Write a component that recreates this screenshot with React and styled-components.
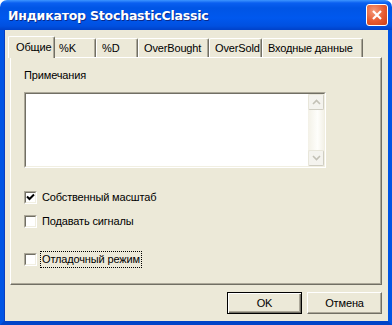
import React from "react";
import styled, { createGlobalStyle } from "styled-components";

const GlobalStyle = createGlobalStyle`
  html, body {
    margin: 0;
    padding: 0;
    background: #ffffff;
  }
  body {
    font-family: "Liberation Sans", Arial, sans-serif;
  }
`;

const tabs = [
  { label: "Общие", width: 47 },
  { label: "%K", width: 43 },
  { label: "%D", width: 42 },
  { label: "OverBought", width: 71 },
  { label: "OverSold", width: 53 },
  { label: "Входные данные", width: 101 },
];

const checks = [
  { label: "Собственный масштаб", checked: true, gap: 0 },
  { label: "Подавать сигналы", checked: false, gap: 11 },
  { label: "Отладочный режим", checked: false, gap: 25, focused: true },
];

const Window = styled.div`
  width: 392px;
  height: 325px;
  display: flex;
  flex-direction: column;
  box-sizing: border-box;
  border-radius: 7px 7px 0 0;
  overflow: hidden;
  font-size: 11px;
  letter-spacing: -0.15px;
  color: #000;
`;

const TitleBar = styled.div`
  height: 30px;
  flex: none;
  display: flex;
  align-items: center;
  justify-content: space-between;
  padding: 0 4px 0 8px;
  box-sizing: border-box;
  background: linear-gradient(
    to bottom,
    #3d95ff 0px,
    #0a5ff0 3px,
    #0055e5 8px,
    #0058ee 18px,
    #0050e0 26px,
    #0041c8 30px
  );
`;

const Title = styled.div`
  color: #fff;
  font-family: "DejaVu Sans", "Liberation Sans", sans-serif;
  font-weight: bold;
  font-size: 12.5px;
  letter-spacing: -0.2px;
  text-shadow: 1px 1px 0 #0a2a8a;
  padding-top: 1px;
`;

const CloseButton = styled.div`
  width: 22px;
  height: 22px;
  box-sizing: border-box;
  border: 1px solid #fff;
  border-radius: 3px;
  background: radial-gradient(circle at 35% 30%, #f59a7a 0%, #e65a30 55%, #cc4018 100%);
  display: flex;
  align-items: center;
  justify-content: center;
`;

const Body = styled.div`
  flex: 1;
  display: flex;
  flex-direction: column;
  background: #ece9d8;
  border-left: 4px solid #0055e5;
  border-right: 4px solid #0055e5;
  border-bottom: 4px solid #0044c8;
  box-shadow: inset 1px 0 0 #0a3fc0;
  padding: 6px;
`;

const TabRow = styled.div`
  display: flex;
  align-items: flex-end;
  height: 21px;
`;

const Tab = styled.div`
  position: relative;
  box-sizing: border-box;
  width: ${(p) => p.$width}px;
  height: ${(p) => (p.$active ? 22 : 19)}px;
  margin: 0 ${(p) => (p.$active ? -2 : 0)}px ${(p) => (p.$active ? -1 : 0)}px;
  z-index: ${(p) => (p.$active ? 2 : 1)};
  background: #ece9d8;
  border-top: 1px solid #fff;
  border-left: 1px solid #fff;
  border-right: 1px solid #716f64;
  border-radius: 2px 2px 0 0;
  box-shadow: inset -1px 0 0 #aca899;
  padding: ${(p) => (p.$active ? "4px 0 0 7px" : "3px 0 0 5px")};
  white-space: nowrap;
`;

const Panel = styled.div`
  flex: none;
  height: 228px;
  box-sizing: border-box;
  border-top: 1px solid #fff;
  border-left: 1px solid #fff;
  border-right: 1px solid #716f64;
  border-bottom: 1px solid #716f64;
  box-shadow: inset -1px -1px 0 #aca899;
  padding: 11px 0 0 13px;
  display: flex;
  flex-direction: column;
`;

const FieldLabel = styled.div`
  line-height: 13px;
`;

const Memo = styled.div`
  margin-top: 10px;
  width: 302px;
  height: 76px;
  box-sizing: border-box;
  border-top: 1px solid #aca899;
  border-left: 1px solid #aca899;
  border-right: 1px solid #fff;
  border-bottom: 1px solid #fff;
  display: flex;
`;

const MemoInner = styled.div`
  flex: 1;
  display: flex;
  border-top: 1px solid #716f64;
  border-left: 1px solid #716f64;
  border-right: 1px solid #f1efe2;
  border-bottom: 1px solid #f1efe2;
  background: #fff;
`;

const MemoText = styled.div`
  flex: 1;
`;

const ScrollBar = styled.div`
  width: 16px;
  display: flex;
  flex-direction: column;
  justify-content: space-between;
  background: linear-gradient(to right, #f3f1e7, #fefefb 60%, #f3f1e7);
`;

const ScrollButton = styled.div`
  height: 16px;
  box-sizing: border-box;
  border: 1px solid #e8e6da;
  border-right-color: #cfcdc2;
  border-bottom-color: #cfcdc2;
  border-radius: 2px;
  background: #f4f3ee;
  display: flex;
  align-items: center;
  justify-content: center;
`;

const CheckList = styled.div`
  margin-top: 23px;
  display: flex;
  flex-direction: column;
`;

const CheckRow = styled.div`
  display: flex;
  align-items: center;
  height: 13px;
  margin-top: ${(p) => p.$gap}px;
`;

const Box = styled.div`
  width: 13px;
  height: 13px;
  box-sizing: border-box;
  border-top: 1px solid #aca899;
  border-left: 1px solid #aca899;
  border-right: 1px solid #fff;
  border-bottom: 1px solid #fff;
  flex: none;
`;

const BoxInner = styled.div`
  width: 11px;
  height: 11px;
  box-sizing: border-box;
  border-top: 1px solid #716f64;
  border-left: 1px solid #716f64;
  border-right: 1px solid #f1efe2;
  border-bottom: 1px solid #f1efe2;
  background: #fff;
  display: flex;
  align-items: center;
  justify-content: center;
`;

const CheckLabel = styled.div`
  margin-left: 4px;
  padding: 1px;
  line-height: 13px;
  outline: ${(p) => (p.$focused ? "1px dotted #000" : "none")};
`;

const Footer = styled.div`
  margin-top: 7px;
  display: flex;
  justify-content: flex-end;
  gap: 5px;
`;

const Button = styled.div`
  width: 75px;
  height: 22px;
  box-sizing: border-box;
  display: flex;
  align-items: center;
  justify-content: center;
  background: #ece9d8;
  border-top: 1px solid ${(p) => (p.$default ? "#000" : "#fff")};
  border-left: 1px solid ${(p) => (p.$default ? "#000" : "#fff")};
  border-right: 1px solid ${(p) => (p.$default ? "#000" : "#716f64")};
  border-bottom: 1px solid ${(p) => (p.$default ? "#000" : "#716f64")};
  box-shadow: ${(p) =>
    p.$default
      ? "inset 1px 1px 0 #fff, inset -1px -1px 0 #716f64, inset -2px -2px 0 #aca899"
      : "inset -1px -1px 0 #aca899"};
`;

const CheckMark = () => (
  <svg width="9" height="9" viewBox="0 0 9 9">
    <path d="M1 3.5 L3.5 6 L8 1.5" fill="none" stroke="#000" strokeWidth="2" />
  </svg>
);

const Arrow = ({ up }) => (
  <svg width="9" height="6" viewBox="0 0 9 6">
    <path
      d={up ? "M1 5 L4.5 1.5 L8 5" : "M1 1 L4.5 4.5 L8 1"}
      fill="none"
      stroke="#c3c1b6"
      strokeWidth="1.6"
    />
  </svg>
);

const App = () => {
  return (
    <>
      <GlobalStyle />
      <Window>
        <TitleBar>
          <Title>Индикатор StochasticClassic</Title>
          <CloseButton>
            <svg width="12" height="12" viewBox="0 0 12 12">
              <path d="M2 2 L10 10 M10 2 L2 10" stroke="#fff" strokeWidth="2.2" />
            </svg>
          </CloseButton>
        </TitleBar>
        <Body>
          <TabRow>
            {tabs.map((t, i) => (
              <Tab key={t.label} $width={t.width} $active={i === 0}>
                {t.label}
              </Tab>
            ))}
          </TabRow>
          <Panel>
            <FieldLabel>Примечания</FieldLabel>
            <Memo>
              <MemoInner>
                <MemoText />
                <ScrollBar>
                  <ScrollButton>
                    <Arrow up />
                  </ScrollButton>
                  <ScrollButton>
                    <Arrow />
                  </ScrollButton>
                </ScrollBar>
              </MemoInner>
            </Memo>
            <CheckList>
              {checks.map((c) => (
                <CheckRow key={c.label} $gap={c.gap}>
                  <Box>
                    <BoxInner>{c.checked && <CheckMark />}</BoxInner>
                  </Box>
                  <CheckLabel $focused={c.focused}>{c.label}</CheckLabel>
                </CheckRow>
              ))}
            </CheckList>
          </Panel>
          <Footer>
            <Button $default>OK</Button>
            <Button>Отмена</Button>
          </Footer>
        </Body>
      </Window>
    </>
  );
};

export default App;
